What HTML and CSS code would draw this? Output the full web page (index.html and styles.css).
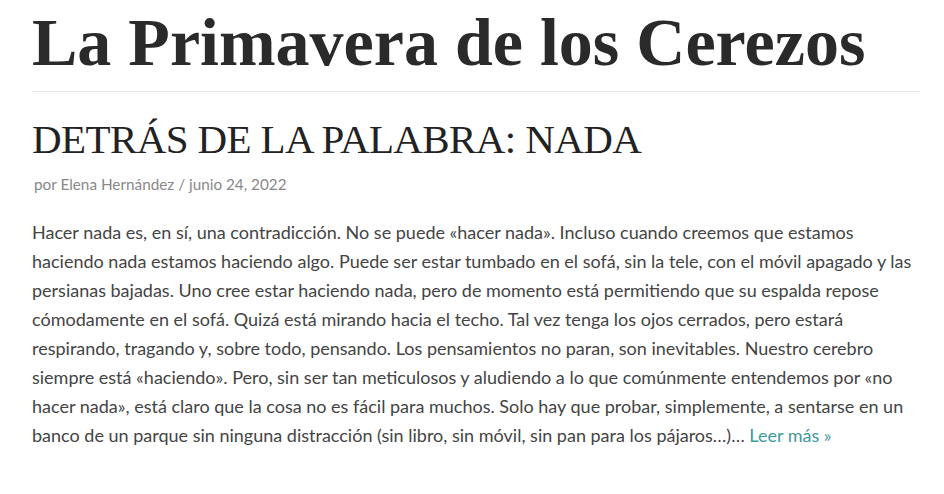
FILE: index.html
```html
<!DOCTYPE html>
<html lang="es">
<head>
    <meta charset="UTF-8">
    <meta name="viewport" content="width=device-width, initial-scale=1.0">
    <title>La Primavera de los Cerezos</title>
    <link rel="stylesheet" href="styles.css">
</head>
<body>
    <div class="site">
        <header class="site-header">
            <h1 class="site-title">La Primavera de los Cerezos</h1>
        </header>
        <article class="post">
            <h2 class="post-title">DETRÁS DE LA PALABRA: NADA</h2>
            <div class="post-meta">por Elena Hernández / junio 24, 2022</div>
            <p class="post-excerpt">Hacer nada es, en sí, una contradicción. No se puede «hacer nada». Incluso cuando creemos que estamos haciendo nada estamos haciendo algo. Puede ser estar tumbado en el sofá, sin la tele, con el móvil apagado y las persianas bajadas. Uno cree estar haciendo nada, pero de momento está permitiendo que su espalda repose cómodamente en el sofá. Quizá está mirando hacia el techo. Tal vez tenga los ojos cerrados, pero estará respirando, tragando y, sobre todo, pensando. Los pensamientos no paran, son inevitables. Nuestro cerebro siempre está «haciendo». Pero, sin ser tan meticulosos y aludiendo a lo que comúnmente entendemos por «no hacer nada», está claro que la cosa no es fácil para muchos. Solo hay que probar, simplemente, a sentarse en un banco de un parque sin ninguna distracción (sin libro, sin móvil, sin pan para los pájaros…)… <a href="#" class="read-more">Leer más »</a></p>
        </article>
    </div>
</body>
</html>
```

FILE: styles.css
```css
body {
    margin: 0;
    background: #fff;
    font-family: Lato, "Open Sans", sans-serif;
    color: #444;
}
.site {
    width: 888px;
    padding: 0 24px 0 32px;
}
.site-header {
    border-bottom: 1px solid #e8e8e8;
    padding: 6px 0 13px;
}
.site-title {
    margin: 0;
    font-family: "Liberation Serif", serif;
    font-weight: bold;
    font-size: 68px;
    line-height: 72px;
    color: #2a2a2a;
}
.post-title {
    margin: 22px 0 0;
    font-family: "Liberation Serif", serif;
    font-weight: normal;
    font-size: 41px;
    line-height: 50px;
    letter-spacing: -0.6px;
    color: #222;
}
.post-meta {
    margin-top: 11px;
    margin-left: 2px;
    font-size: 15.3px;
    color: #888;
}
.post-excerpt {
    margin: 25px 0 0;
    font-size: 18px;
    line-height: 29px;
}
.read-more {
    color: #3d9a9b;
    text-decoration: none;
}
```
